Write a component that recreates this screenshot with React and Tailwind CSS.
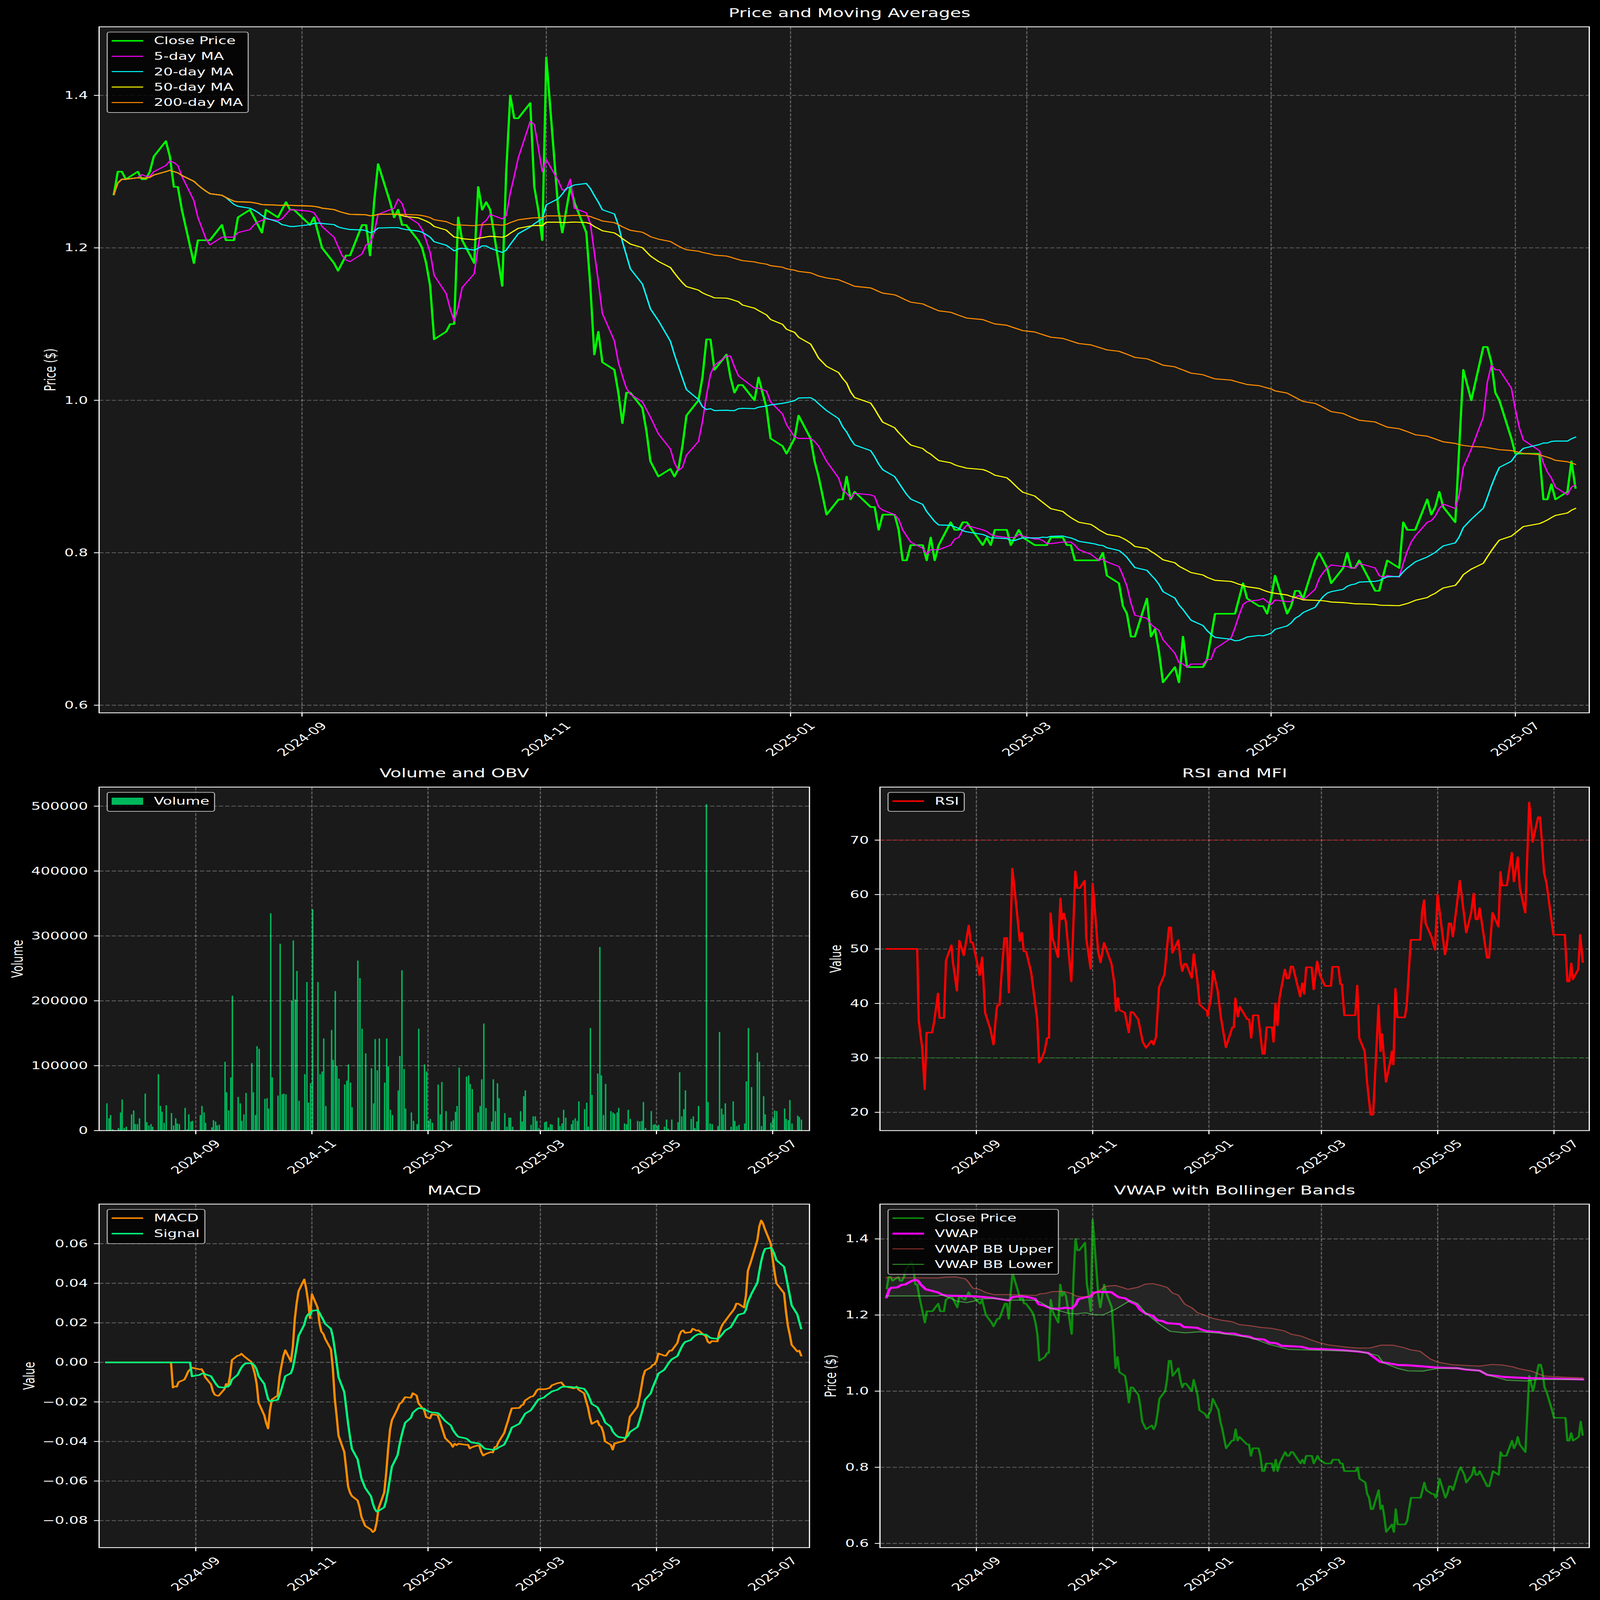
const FONT = "font-['DejaVu_Sans',sans-serif]";

// The stage is designed at the reference's 4471x6507. The sandbox window was measured at
// 4096x4096, so the stage is scaled down to fit when the window is smaller; at 4471x6507 the scale is 1.
const STAGE_W = 4471;
const STAGE_H = 6507;

const CLOSE = [0,1.27,1,1.3,2,1.3,3,1.29,6,1.3,7,1.29,8,1.29,9,1.3,10,1.32,13,1.34,14,1.32,15,1.28,16,1.28,17,1.25,20,1.18,21,1.21,22,1.21,23,1.21,24,1.21,27,1.23,28,1.21,29,1.21,30,1.21,31,1.24,34,1.25,35,1.24,36,1.23,37,1.22,38,1.25,41,1.24,42,1.25,43,1.26,44,1.25,45,1.25,49,1.23,50,1.24,51,1.22,52,1.2,55,1.18,56,1.17,57,1.18,58,1.19,59,1.19,62,1.23,63,1.23,64,1.19,65,1.26,66,1.31,69,1.26,70,1.24,71,1.25,72,1.23,73,1.23,76,1.21,77,1.2,78,1.18,79,1.15,80,1.08,83,1.09,84,1.1,85,1.1,86,1.24,87,1.21,90,1.18,91,1.28,92,1.25,93,1.26,94,1.25,97,1.15,98,1.3,99,1.4,100,1.37,101,1.37,104,1.39,105,1.28,106,1.25,107,1.21,108,1.45,111,1.25,112,1.22,113,1.25,114,1.28,115,1.26,118,1.22,119,1.15,120,1.06,121,1.09,122,1.05,125,1.04,126,1.01,127,0.97,128,1.01,129,1.01,132,0.99,133,0.96,134,0.92,136,0.9,139,0.91,140,0.9,141,0.91,142,0.94,143,0.98,146,1,147,1.03,148,1.08,149,1.08,150,1.04,153,1.06,154,1.03,155,1.01,156,1.02,157,1.02,160,1,161,1.03,163,0.99,164,0.95,167,0.94,168,0.93,170,0.95,171,0.98,174,0.95,175,0.92,176,0.9,178,0.85,181,0.87,182,0.87,183,0.9,184,0.87,185,0.88,189,0.86,190,0.86,191,0.83,192,0.85,195,0.85,196,0.83,197,0.79,198,0.79,199,0.81,202,0.81,203,0.79,204,0.82,205,0.79,206,0.81,209,0.84,210,0.83,211,0.83,212,0.84,213,0.84,217,0.81,218,0.82,219,0.81,220,0.83,223,0.83,224,0.81,225,0.82,226,0.83,227,0.82,230,0.81,231,0.81,232,0.81,233,0.81,234,0.82,237,0.82,238,0.81,239,0.81,240,0.79,241,0.79,244,0.79,245,0.79,246,0.79,247,0.8,248,0.77,251,0.76,252,0.73,253,0.72,254,0.69,255,0.69,258,0.74,259,0.69,260,0.7,261,0.67,262,0.63,265,0.65,266,0.63,267,0.69,268,0.65,269,0.65,272,0.65,273,0.66,274,0.69,275,0.72,279,0.72,280,0.72,281,0.74,282,0.76,283,0.74,286,0.73,287,0.73,288,0.72,289,0.74,290,0.77,293,0.72,294,0.73,295,0.75,296,0.75,297,0.74,300,0.79,301,0.8,302,0.79,303,0.78,304,0.76,307,0.78,308,0.8,309,0.78,310,0.78,311,0.79,315,0.75,316,0.75,317,0.77,318,0.79,321,0.78,322,0.84,323,0.83,324,0.83,325,0.83,328,0.87,329,0.85,330,0.86,331,0.88,332,0.86,335,0.84,336,0.94,337,1.04,339,1,342,1.07,343,1.07,344,1.05,345,1.01,346,1,349,0.95,350,0.93,351,0.93,352,0.93,356,0.93,357,0.87,358,0.87,359,0.89,360,0.87,363,0.88,364,0.92,365,0.885];

const VOLUME = [203,42,207,19,210,24,214,2,225,4,229,28,232,48,236,4,240,6,250,25,254,31,257,10,261,10,265,19,276,57,279,13,283,8,287,10,290,6,301,87,305,38,308,29,312,12,316,39,326,27,330,8,334,19,337,11,341,10,352,35,356,2,359,25,363,14,366,15,381,24,384,38,388,28,391,12,403,5,406,16,410,14,413,8,417,9,428,106,431,59,435,31,439,82,442,208,453,52,457,42,460,15,464,25,468,58,479,104,482,59,486,24,489,130,493,126,504,49,508,50,511,34,515,335,518,82,529,54,533,288,537,56,540,57,544,56,555,200,558,293,562,202,565,246,569,46,580,87,584,229,587,43,591,73,595,341,605,229,609,87,613,91,616,142,620,38,631,155,634,109,638,215,641,100,645,80,656,71,660,77,663,102,667,74,670,36,681,262,685,235,689,157,696,119,707,96,711,42,714,141,718,93,722,142,732,74,736,142,739,99,743,32,747,24,758,62,761,115,765,247,769,95,772,34,783,28,787,15,794,10,797,157,808,102,812,91,816,15,819,18,823,12,834,71,838,25,841,75,849,30,859,14,863,16,867,29,870,38,874,97,888,83,892,85,895,72,899,64,910,28,914,38,917,79,921,165,925,35,936,14,939,79,943,30,947,73,950,50,961,27,965,6,969,20,972,20,976,6,991,30,994,14,997,53,1000,62,1011,9,1015,22,1019,22,1022,15,1026,4,1037,13,1040,14,1044,5,1048,10,1051,9,1063,20,1066,7,1070,11,1073,32,1077,20,1088,10,1091,16,1095,19,1099,15,1102,45,1113,33,1117,43,1120,6,1124,158,1127,55,1138,88,1142,283,1145,85,1149,24,1153,72,1163,30,1167,28,1170,26,1175,28,1178,35,1189,11,1193,10,1196,32,1200,18,1214,15,1218,14,1222,15,1225,44,1229,4,1240,30,1244,9,1247,10,1251,7,1254,9,1265,6,1269,17,1272,3,1276,1,1279,17,1291,13,1294,90,1298,22,1302,33,1305,62,1316,18,1320,22,1323,4,1327,14,1330,38,1345,503,1348,44,1352,11,1356,10,1367,7,1370,152,1374,34,1377,25,1381,42,1392,6,1396,45,1399,15,1403,7,1407,9,1418,11,1421,76,1425,158,1431,67,1442,120,1446,106,1450,7,1454,53,1457,25,1468,12,1472,19,1475,31,1479,30,1494,34,1497,18,1501,16,1504,47,1508,11,1519,23,1522,21,1526,17];

const VWAP = [128,438,134,408,137,403,150,401,158,392,166,390,178,378,185,373,191,375,197,390,207,408,222,415,232,420,240,428,250,432,280,433,310,435,340,440,375,450,382,437,400,434,415,438,428,444,435,464,447,470,460,480,475,481,490,477,502,480,510,465,515,445,530,438,540,435,545,421,555,418,582,419,590,430,597,438,610,442,620,455,632,465,640,485,650,498,665,507,675,524,685,527,695,535,720,538,728,549,755,552,762,558,775,565,800,568,810,573,830,574,845,582,860,585,870,593,890,596,900,607,915,610,925,619,965,623,980,630,1010,632,1050,636,1080,641,1100,646,1110,660,1125,680,1140,684,1160,691,1180,692,1210,696,1240,701,1280,703,1295,708,1325,712,1340,728,1360,732,1375,736,1420,740,1533,745];

const UPPER = [128,365,232,366,245,363,268,362,287,369,292,378,302,404,315,408,328,420,345,428,375,428,410,430,430,431,438,425,450,423,462,417,485,416,500,423,510,433,525,437,540,433,560,410,570,397,590,394,605,402,615,408,635,401,650,389,665,387,680,393,695,402,705,422,717,430,730,464,745,478,755,495,770,505,785,516,805,524,825,529,840,540,860,544,885,551,905,554,930,563,945,576,965,583,980,594,1000,607,1020,616,1060,625,1080,628,1105,627,1125,617,1150,617,1170,625,1185,634,1205,640,1225,668,1240,680,1270,690,1300,693,1325,695,1350,689,1370,691,1390,697,1405,705,1430,714,1455,732,1500,737,1533,739];

const LOWER = [128,433,232,433,240,430,255,440,270,453,290,458,305,452,315,445,345,442,375,449,430,449,440,458,460,480,475,487,495,498,510,500,530,496,545,503,565,504,590,483,620,450,635,462,650,495,680,540,700,565,730,571,760,567,800,572,850,585,870,593,900,614,940,633,1000,636,1080,640,1100,648,1120,656,1130,682,1160,704,1180,713,1210,714,1240,704,1280,703,1325,713,1345,730,1380,748,1420,751,1440,745,1533,745];

const RSI = [128,701,190,701,193,968,197,1030,200,1070,205,1228,209,1015,220,1015,224,975,232,868,235,960,244,960,248,745,259,687,262,750,270,858,275,670,284,725,294,613,298,677,302,677,310,745,316,800,321,732,327,940,338,1005,344,1060,350,930,352,912,356,912,360,800,366,660,371,660,375,865,382,399,390,540,397,672,401,640,405,710,410,712,420,790,432,965,436,1128,440,1118,447,1085,452,1035,456,1035,459,567,463,660,474,732,479,512,482,590,486,568,490,600,501,823,509,410,513,473,518,473,528,445,531,660,540,776,544,457,550,590,555,710,560,752,567,678,582,757,588,833,591,935,595,885,598,930,609,940,617,1015,621,938,625,938,636,965,645,1050,652,1072,663,1045,667,1060,672,1030,678,845,689,797,698,620,702,620,705,716,717,668,722,755,725,785,729,757,733,757,744,810,748,720,755,815,760,910,775,935,776,953,783,880,787,783,796,855,803,960,813,1070,826,995,829,995,832,886,837,955,841,918,856,965,860,965,864,1035,868,950,878,950,887,1095,891,1095,895,995,906,995,909,1050,913,905,917,988,921,885,932,778,936,812,940,812,944,767,948,767,963,880,967,830,971,870,975,770,986,770,990,853,997,748,1003,800,1013,840,1025,840,1028,768,1040,768,1044,833,1047,833,1052,950,1074,950,1078,838,1082,1035,1093,1085,1098,1205,1105,1323,1110,1323,1121,912,1125,1085,1128,1020,1136,1200,1144,1130,1148,1085,1151,1135,1155,850,1159,958,1174,958,1178,910,1186,667,1205,667,1209,560,1213,518,1216,605,1228,657,1235,705,1240,497,1255,722,1259,685,1263,605,1267,605,1271,655,1285,445,1298,640,1308,565,1313,493,1317,590,1321,590,1325,548,1340,735,1344,735,1351,565,1363,618,1367,412,1370,463,1380,463,1390,340,1394,448,1402,357,1406,470,1417,565,1425,152,1432,300,1443,207,1447,207,1455,415,1460,455,1474,648,1497,648,1502,823,1506,823,1510,755,1513,815,1524,778,1528,648,1533,750];

const pairs = (flat) => {
  const out = [];
  for (let i = 0; i < flat.length; i += 2) out.push([flat[i], flat[i + 1]]);
  return out;
};

const days = pairs(CLOSE);
const closes = days.map((p) => p[1]);

const rolling = (n) =>
  closes.map((_, i) => {
    const from = Math.max(0, i - n + 1);
    const slice = closes.slice(from, i + 1);
    return slice.reduce((a, b) => a + b, 0) / slice.length;
  });

const ema = (values, span) => {
  const k = 2 / (span + 1);
  const out = [];
  values.forEach((v, i) => out.push(i === 0 ? v : v * k + out[i - 1] * (1 - k)));
  return out;
};
const e12 = ema(closes, 12);
const e26 = ema(closes, 26);
const macdRaw = closes.map((_, i) => e12[i] - e26[i]);
const macd = macdRaw.map((v, i) => (i < 25 ? 0 : v));
const sigRaw = ema(macdRaw.slice(25), 9);
const signal = closes.map((_, i) => (i < 33 ? 0 : sigRaw[i - 25]));

const line = (values, fx, fy) =>
  values.map((v, i) => `${fx(days[i][0]).toFixed(1)},${fy(v).toFixed(1)}`).join(" ");

const Path = ({ points, stroke, width = 6.25, opacity = 1 }) => (
  <polyline
    points={points}
    fill="none"
    stroke={stroke}
    strokeWidth={width}
    strokeOpacity={opacity}
    strokeLinejoin="round"
    strokeLinecap="square"
  />
);

const DATE_TICKS = [
  [47, "2024-09"],
  [108, "2024-11"],
  [169, "2025-01"],
  [228, "2025-03"],
  [289, "2025-05"],
  [350, "2025-07"],
];

function Legend({ items }) {
  return (
    <div className="absolute left-[21px] top-[20px] rounded-[8px] border-[3px] border-[#b0b0b0] bg-black/80 pb-[8px] pl-[11px] pr-[13px] pt-[3px]">
      {items.map((item) => (
        <div key={item.label} className="flex h-[62.6px] items-center gap-[30px]">
          <span className={`w-[88px] ${item.swatch}`} />
          <span className="whitespace-nowrap text-[41.67px] leading-none text-white">{item.label}</span>
        </div>
      ))}
    </div>
  );
}

function Chart({ title, plotClass, w, h, x0, scale, yTicks, yLabel, labelX, legend, under, children }) {
  return (
    <section>
      <h2 className="pb-[26px] text-center text-[50px] font-normal leading-[60px] text-white">{title}</h2>
      <div className={`relative bg-[#1a1a1a] ${plotClass}`}>
        <svg className="absolute inset-0 overflow-visible" width={w} height={h} fill="#ffffff">
          {under}
          {DATE_TICKS.map(([d]) => (
            <line key={d} x1={x0 + scale * d} x2={x0 + scale * d} y1={0} y2={h} stroke="#ffffff" strokeOpacity="0.3" strokeWidth="3.3" strokeDasharray="12.3 5.3" />
          ))}
          {yTicks.map(([y, label]) => (
            <line key={label} x1={0} x2={w} y1={y} y2={y} stroke="#ffffff" strokeOpacity="0.3" strokeWidth="3.3" strokeDasharray="12.3 5.3" />
          ))}
          {children}
          <rect x={0} y={0} width={w} height={h} fill="none" stroke="#ffffff" strokeWidth="3.3" />
          {yTicks.map(([y, label]) => (
            <g key={label}>
              <line x1={-14.6} x2={0} y1={y} y2={y} stroke="#ffffff" strokeWidth="3.3" />
              <text x={-31} y={y} textAnchor="end" dominantBaseline="central" fontSize="41.67">{label}</text>
            </g>
          ))}
          {DATE_TICKS.map(([d, label]) => (
            <g key={d}>
              <line x1={x0 + scale * d} x2={x0 + scale * d} y1={h} y2={h + 14.6} stroke="#ffffff" strokeWidth="3.3" />
              <text transform={`translate(${x0 + scale * d},${h + 107}) rotate(-45)`} textAnchor="middle" dominantBaseline="central" fontSize="41.67">{label}</text>
            </g>
          ))}
          <text transform={`translate(${labelX},${h / 2}) rotate(-90)`} textAnchor="middle" dominantBaseline="central" fontSize="41.67">{yLabel}</text>
        </svg>
        <Legend items={legend} />
      </div>
    </section>
  );
}

const mainX = (d) => 41 + 11.19 * d;
const mainY = (v) => 279 + (1.4 - v) * 3100;
const subX = (d) => 20 + 5.32 * d;
const rsiY = (v) => 215.7 + (70 - v) * 22.14;
const macdY = (v) => 161 + (0.06 - v) * 8043;
const vwapY = (v) => 141.5 + (1.4 - v) * 1548;
const bandPts = (flat) => pairs(flat).map(([a, b]) => [a / 0.7222 - 159, b / 0.9186 - 98]);
const rsiPts = pairs(RSI).map(([a, b]) => [a / 0.7222 - 159, (b - 94) / 0.9224]);
const toStr = (list) => list.map(([a, b]) => `${a.toFixed(1)},${b.toFixed(1)}`).join(" ");

const mainTicks = [[1.4, "1.4"], [1.2, "1.2"], [1.0, "1.0"], [0.8, "0.8"], [0.6, "0.6"]];
const volTicks = [0, 100, 200, 300, 400, 500].map((k) => [1397 - 2.639 * k, k === 0 ? "0" : `${k}000`]);
const rsiTicks = [70, 60, 50, 40, 30, 20].map((v) => [rsiY(v), String(v)]);
const macdTicks = [
  [0.06, "0.06"], [0.04, "0.04"], [0.02, "0.02"], [0, "0.00"],
  [-0.02, "\u22120.02"], [-0.04, "\u22120.04"], [-0.06, "\u22120.06"], [-0.08, "\u22120.08"],
];

export default function App() {
  const upper = bandPts(UPPER);
  const lower = bandPts(LOWER);
  const sx = Math.min(1, window.innerWidth / STAGE_W);
  const sy = Math.min(1, window.innerHeight / STAGE_H);
  return (
    <div className="h-screen w-screen overflow-hidden bg-black">
      <div
        className={`h-[6507px] w-[4471px] origin-top-left bg-black pl-[277px] pt-[23px] ${FONT}`}
        style={{ transform: `scale(${sx},${sy})` }}
      >
        <Chart
          title="Price and Moving Averages"
          plotClass="h-[2790px] w-[4164px]"
          w={4164}
          h={2790}
          x0={41}
          scale={11.19}
          yTicks={mainTicks.map(([v, l]) => [mainY(v), l])}
          yLabel="Price ($)"
          labelX={-136}
          legend={[
            { label: "Close Price", swatch: "h-[6px] bg-[#00ff00]" },
            { label: "5-day MA", swatch: "h-[4px] bg-[#ff00ff]" },
            { label: "20-day MA", swatch: "h-[4px] bg-[#00ffff]" },
            { label: "50-day MA", swatch: "h-[4px] bg-[#ffff00]" },
            { label: "200-day MA", swatch: "h-[4px] bg-[#ff8c00]" },
          ]}
        >
          <Path points={line(closes, mainX, mainY)} stroke="#00ff00" />
          <Path points={line(rolling(5), mainX, mainY)} stroke="#ff00ff" width={4.2} />
          <Path points={line(rolling(20), mainX, mainY)} stroke="#00ffff" width={4.2} />
          <Path points={line(rolling(50), mainX, mainY)} stroke="#ffff00" width={4.2} />
          <Path points={line(rolling(200), mainX, mainY)} stroke="#ff8c00" width={4.2} />
        </Chart>

        <div className="mt-[216px] grid grid-cols-[1985px_1982px] gap-x-[197px] gap-y-[213px]">
          <Chart
            title="Volume and OBV"
            plotClass="h-[1397px] w-[1985px]"
            w={1985}
            h={1397}
            x0={20}
            scale={5.32}
            yTicks={volTicks}
            yLabel="Volume"
            labelX={-228}
            legend={[{ label: "Volume", swatch: "h-[29px] bg-[#00b85c]" }]}
            under={pairs(VOLUME).map(([zx, k]) => (
              <rect key={zx} x={zx / 0.6817 - 276 - 2} y={1397 - 2.639 * k} width="4" height={2.639 * k} fill="#00b85c" />
            ))}
          />
          <Chart
            title="RSI and MFI"
            plotClass="h-[1397px] w-[1982px]"
            w={1982}
            h={1397}
            x0={19}
            scale={5.327}
            yTicks={rsiTicks}
            yLabel="Value"
            labelX={-123}
            legend={[{ label: "RSI", swatch: "h-[6px] bg-[#ff0000]" }]}
          >
            <line x1={0} x2={1982} y1={rsiY(70)} y2={rsiY(70)} stroke="#ff0000" strokeOpacity="0.5" strokeWidth="4" strokeDasharray="15 6" />
            <line x1={0} x2={1982} y1={rsiY(30)} y2={rsiY(30)} stroke="#00a000" strokeOpacity="0.5" strokeWidth="4" strokeDasharray="15 6" />
            <Path points={toStr(rsiPts)} stroke="#ff0000" />
          </Chart>
          <Chart
            title="MACD"
            plotClass="h-[1397px] w-[1985px]"
            w={1985}
            h={1397}
            x0={20}
            scale={5.32}
            yTicks={macdTicks.map(([v, l]) => [macdY(v), l])}
            yLabel="Value"
            labelX={-195}
            legend={[
              { label: "MACD", swatch: "h-[6px] bg-[#ff8c00]" },
              { label: "Signal", swatch: "h-[6px] bg-[#00ff7f]" },
            ]}
          >
            <Path points={line(macd, subX, macdY)} stroke="#ff8c00" />
            <Path points={line(signal, subX, macdY)} stroke="#00ff7f" />
          </Chart>
          <Chart
            title="VWAP with Bollinger Bands"
            plotClass="h-[1397px] w-[1982px]"
            w={1982}
            h={1397}
            x0={19}
            scale={5.327}
            yTicks={mainTicks.map(([v, l]) => [vwapY(v), l])}
            yLabel="Price ($)"
            labelX={-137}
            legend={[
              { label: "Close Price", swatch: "h-[6px] bg-[#0c8c0c]" },
              { label: "VWAP", swatch: "h-[8px] bg-[#ff00ff]" },
              { label: "VWAP BB Upper", swatch: "h-[4px] bg-[#8c2d2d]" },
              { label: "VWAP BB Lower", swatch: "h-[4px] bg-[#2d8c2d]" },
            ]}
          >
            <Path points={line(closes, (d) => 19 + 5.327 * d, vwapY)} stroke="#00ff00" opacity={0.5} />
            <Path points={toStr(bandPts(VWAP))} stroke="#ff00ff" width={8.3} />
            <Path points={toStr(upper)} stroke="#ff5a5a" width={4.2} opacity={0.5} />
            <Path points={toStr(lower)} stroke="#5aff5a" width={4.2} opacity={0.5} />
            <polygon points={toStr([...upper, ...[...lower].reverse()])} fill="#ffffff" fillOpacity="0.05" />
          </Chart>
        </div>
      </div>
    </div>
  );
}
